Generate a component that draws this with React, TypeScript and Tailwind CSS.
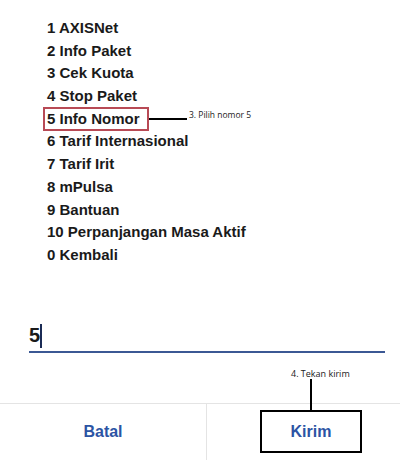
const items = [
  "1 AXISNet",
  "2 Info Paket",
  "3 Cek Kuota",
  "4 Stop Paket",
  "5 Info Nomor",
  "6 Tarif Internasional",
  "7 Tarif Irit",
  "8 mPulsa",
  "9 Bantuan",
  "10 Perpanjangan Masa Aktif",
  "0 Kembali",
];

export default function App() {
  return (
    <div className="w-[400px] h-[460px] bg-white flex flex-col font-['Liberation_Sans',_Arial,_sans-serif] text-[#1a1a1a] overflow-hidden">
      {/* USSD menu */}
      <ul className="pt-[17px] pl-[47px] flex flex-col">
        {items.map((item) =>
          item.startsWith("5 ") ? (
            <li key={item} className="relative h-[22.7px] leading-[22.7px] text-[15px] font-bold">
              <span className="absolute -left-[4px] top-[-1px] w-[106px] h-[24px] border-2 border-[#b84a55]" />
              {item}
              <span className="absolute left-[102px] top-[10px] w-[38px] h-[2px] bg-black" />
              <span className="absolute left-[142px] top-[-4px] text-[8.5px] font-normal font-['Open_Sans',_sans-serif] text-[#222]">
                3. Pilih nomor 5
              </span>
            </li>
          ) : (
            <li key={item} className="h-[22.7px] leading-[22.7px] text-[15px] font-bold">
              {item}
            </li>
          )
        )}
      </ul>

      {/* Input */}
      <div className="mt-[56px] ml-[29px] mr-[15px] h-[30px] flex items-end border-b-2 border-[#3b5894]">
        <span className="text-[20px] font-bold leading-none pb-[6px]">5</span>
        <span className="w-[2px] h-[24px] bg-[#1b2b55] mb-[3px]" />
      </div>

      {/* Buttons */}
      <div className="relative mt-auto h-[57px] border-t border-[#e4e4e4] grid grid-cols-[207px_1fr]">
        <div className="flex items-center justify-center border-r border-[#e4e4e4]">
          <span className="text-[16px] font-bold text-[#2c54a4]">Batal</span>
        </div>
        <div className="flex items-start pt-[6px] pl-[53px]">
          <div className="w-[102px] h-[43px] border-2 border-black flex items-center justify-center">
            <span className="text-[16px] font-bold text-[#2c54a4]">Kirim</span>
          </div>
        </div>
        <span className="absolute left-[310px] top-[-25px] w-[2px] h-[32px] bg-black" />
        <span className="absolute left-[291px] top-[-37px] text-[9px] font-['Open_Sans',_sans-serif] text-[#222]">
          4. Tekan kirim
        </span>
      </div>
    </div>
  );
}
